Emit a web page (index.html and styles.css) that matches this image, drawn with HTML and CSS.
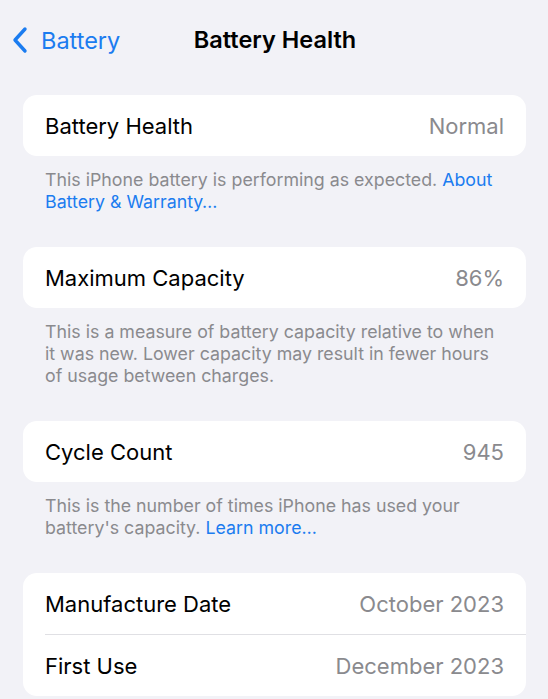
FILE: index.html
```html
<!DOCTYPE html>
<html>
<head>
<meta charset="utf-8">
<link rel="stylesheet" href="styles.css">
</head>
<body>
<div class="nav">
  <div class="back">
    <svg class="chev" width="18" height="28" viewBox="0 0 18 28"><path d="M14 3 L4 14 L14 25" fill="none" stroke="#1b7cf0" stroke-width="3.4" stroke-linecap="round" stroke-linejoin="round"/></svg>
    <span>Battery</span>
  </div>
  <div class="title">Battery Health</div>
</div>
<div class="content">
  <div class="card"><div class="row"><span class="label">Battery Health</span><span class="value">Normal</span></div></div>
  <p class="footer">This iPhone battery is performing as expected. <span class="link">About Battery &amp; Warranty…</span></p>

  <div class="card"><div class="row"><span class="label">Maximum Capacity</span><span class="value">86%</span></div></div>
  <p class="footer">This is a measure of battery capacity relative to when it was new. Lower capacity may result in fewer hours of usage between charges.</p>

  <div class="card"><div class="row"><span class="label">Cycle Count</span><span class="value">945</span></div></div>
  <p class="footer">This is the number of times iPhone has used your battery's capacity. <span class="link">Learn more…</span></p>

  <div class="card">
    <div class="row"><span class="label">Manufacture Date</span><span class="value">October 2023</span></div>
    <div class="divider"></div>
    <div class="row"><span class="label">First Use</span><span class="value">December 2023</span></div>
  </div>
</div>
</body>
</html>
```
FILE: styles.css
```css
html, body {
  margin: 0;
  padding: 0;
  background: #f2f2f7;
  font-family: Inter, "Noto Sans", sans-serif;
  -webkit-font-smoothing: antialiased;
}
.nav {
  height: 80px;
  display: flex;
  align-items: flex-start;
  position: relative;
  box-sizing: border-box;
  padding-top: 26px;
}
.back {
  display: flex;
  align-items: center;
  gap: 12px;
  padding-left: 11px;
  color: #1b7cf0;
  font-size: 23.5px;
  height: 28px;
}
.chev { display: block; }
.title {
  position: absolute;
  left: 0;
  right: 0;
  top: 26px;
  height: 28px;
  line-height: 28px;
  text-align: center;
  font-size: 23.5px;
  font-weight: 600;
  color: #000;
  padding-left: 2px;
  pointer-events: none;
}
.content {
  padding: 15px 22px 0 23px;
}
.card {
  background: #fff;
  border-radius: 14px;
  overflow: hidden;
}
.row {
  height: 61px;
  display: flex;
  align-items: center;
  justify-content: space-between;
  padding: 0 22px;
  font-size: 22px;
}
.label { color: #000; }
.value { color: #8a8a8e; }
.divider {
  height: 1px;
  background: #e0e0e4;
  margin-left: 22px;
}
.footer {
  margin: 0;
  padding: 13px 22px 34px;
  font-size: 17.8px;
  line-height: 22px;
  color: #8a8a8e;
}
.link { color: #1b7cf0; }
```
